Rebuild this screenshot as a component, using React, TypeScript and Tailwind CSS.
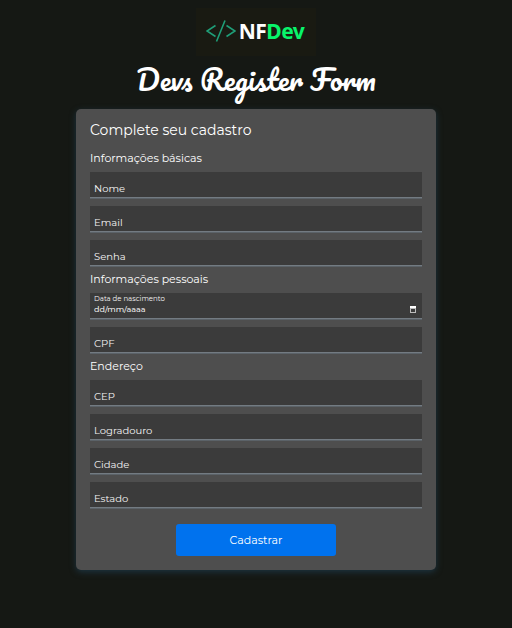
import React from "react";

type FieldProps = { id: string; label: string; type?: string };

function Field({ id, label, type = "text" }: FieldProps) {
  return (
    <div className="relative h-[26px] border-b border-[#737b82] bg-[#3b3b3b] shadow-[0_1px_0_#5b6268]">
      <input
        id={id}
        type={type}
        className="h-full w-full bg-transparent px-1 pt-2 text-[10px] text-white outline-none"
      />
      <label
        htmlFor={id}
        className="pointer-events-none absolute bottom-0 left-1 text-[10px] leading-4 text-[#f5f5f5]"
      >
        {label}
      </label>
    </div>
  );
}

function DateField() {
  return (
    <div className="relative flex h-[26px] items-end border-b border-[#737b82] bg-[#3b3b3b] shadow-[0_1px_0_#5b6268]">
      <label htmlFor="nascimento" className="absolute top-0 left-1 text-[7px] leading-3 text-[#f5f5f5]">
        Data de nascimento
      </label>
      <input
        id="nascimento"
        type="text"
        placeholder="dd/mm/aaaa"
        className="h-[18px] min-w-0 flex-1 bg-transparent px-1 text-[8px] leading-4 font-medium text-white outline-none placeholder:text-[#ececec]"
      />
      <button type="button" aria-label="Abrir calendário" className="mr-[3px] flex h-4 w-3 items-center justify-center">
        <svg viewBox="0 0 8 8" className="h-2 w-2" shapeRendering="crispEdges">
          <path d="M1 1h6v6H1z M2 3v3h4V3z" fill="#bdbdbd" fillRule="evenodd" />
          <path d="M1 0h6v2H1z" fill="#ffffff" />
        </svg>
      </button>
    </div>
  );
}

function Section({ title, children }: { title: string; children: React.ReactNode }) {
  return (
    <fieldset>
      <legend className="pb-0.5 text-[11px] leading-6 text-white">{title}</legend>
      <div className="flex flex-col gap-2 pb-px">{children}</div>
    </fieldset>
  );
}

export default function App() {
  return (
    <div className="flex min-h-screen flex-col items-center bg-[#151814] px-4 pt-2 pb-8 font-['Montserrat','Inter',sans-serif]">
      <header className="flex flex-col items-center">
        <div className="flex h-12 w-30 items-center justify-center gap-[3px] bg-[#191a12] pr-0.5 pb-0.5">
          <svg viewBox="0 0 30 22" className="h-[22px] w-[30px]" fill="none" stroke="#1f9e78" strokeWidth="1.6">
            <path d="M9.500 5.500L1 11l8.500 5.500M20.500 5.500L29 11l-8.500 5.500M19 0.500L10.500 21.500" />
          </svg>
          <span className="font-['Noto_Sans',sans-serif] text-[21px] leading-6 font-bold tracking-tight text-white">
            NF<span className="text-[#08f56b]">Dev</span>
          </span>
        </div>
        <h1 className="pb-1.5 text-[28px] leading-[47px] font-normal whitespace-nowrap text-white font-['Pacifico','Lato',cursive]">
          Devs Register Form
        </h1>
      </header>
      <form className="w-full max-w-[360px] rounded-[5px] bg-[#4e4e4e] p-[14px] shadow-[0_2px_6px_#1d3440]">
        <h2 className="pb-2 text-[14px] leading-[15px] text-white">Complete seu cadastro</h2>
        <Section title="Informações básicas">
          <Field id="nome" label="Nome" />
          <Field id="email" label="Email" type="email" />
          <Field id="senha" label="Senha" type="password" />
        </Section>
        <Section title="Informações pessoais">
          <DateField />
          <Field id="cpf" label="CPF" />
        </Section>
        <Section title="Endereço">
          <Field id="cep" label="CEP" />
          <Field id="logradouro" label="Logradouro" />
          <Field id="cidade" label="Cidade" />
          <Field id="estado" label="Estado" />
        </Section>
        <button
          type="submit"
          className="mx-auto mt-[15px] block h-8 w-40 rounded-[3px] bg-[#0072ee] text-[11px] leading-4 text-white"
        >
          Cadastrar
        </button>
      </form>
    </div>
  );
}
